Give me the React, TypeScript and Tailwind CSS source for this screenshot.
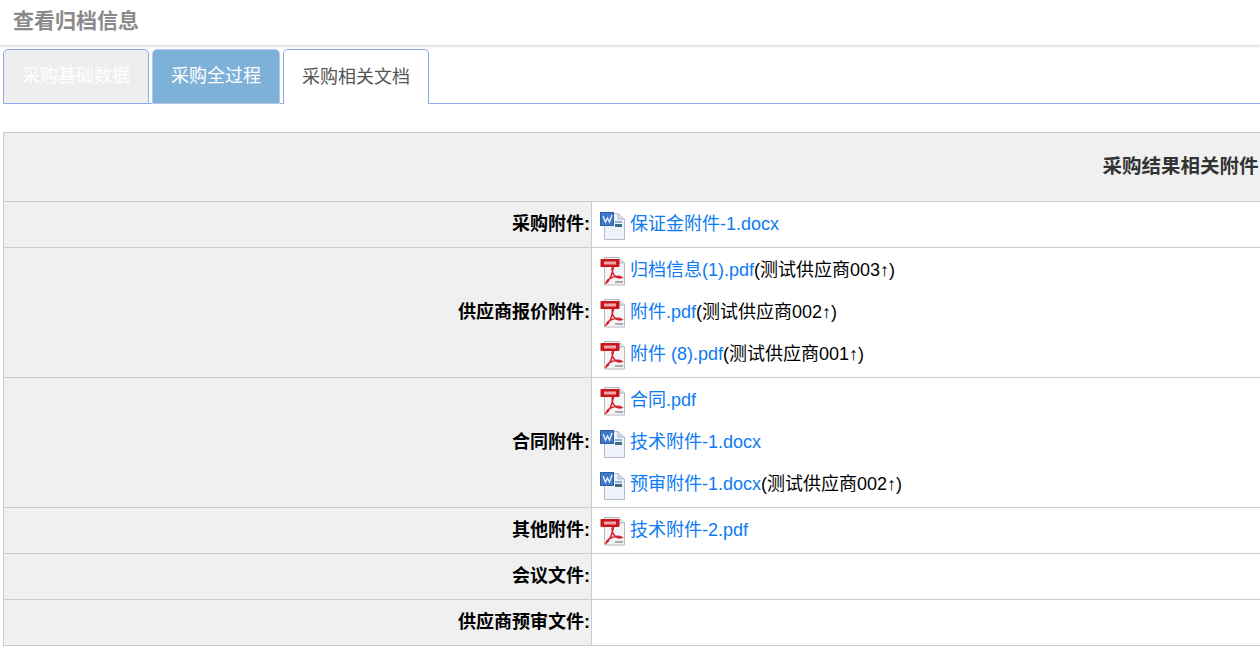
import React from 'react';

const FONT = "font-['Liberation_Sans','Noto_Sans_CJK_SC',sans-serif]";

const PdfIcon = () => (
  <svg width="26" height="30" viewBox="0 0 26 30" className="shrink-0">
    <path d="M4.5 1.5H19L24.5 7V29H4.5Z" fill="#f4f4f6" stroke="#b9b9bf" />
    <path d="M19 1.5V7H24.5" fill="#dcdce2" stroke="#b9b9bf" />
    <rect x="0.5" y="3" width="19" height="8" rx="1" fill="#c8171d" />
    <rect x="4" y="5.5" width="12" height="3" fill="#f0a7a7" />
    <path
      d="M12.5 11C11.5 14 12 16 14 19C16 21.5 19 22.5 22 21.5C19 19.5 15 20 10.5 22C8 23.5 6.5 25.5 6 27C9 25.5 11.5 20.5 13.5 11"
      fill="none"
      stroke="#d2232a"
      strokeWidth="1.5"
    />
    <rect x="15" y="25" width="8" height="2" fill="#a9a9ae" />
  </svg>
);

const WordIcon = () => (
  <svg width="26" height="30" viewBox="0 0 26 30" className="shrink-0">
    <path d="M4.5 3.5H18L24.5 9V29.5H4.5Z" fill="#eef2f9" stroke="#b4bccb" />
    <path d="M18 3.5V9H24.5" fill="#d5dce9" stroke="#b4bccb" />
    <rect x="0.5" y="2.5" width="13" height="13" fill="#3f77c9" stroke="#2f5ea8" />
    <path d="M3 6L5.5 12L7.5 8L9.5 12L12 5" fill="none" stroke="#e7effa" strokeWidth="1.4" />
    <rect x="15" y="11" width="7" height="2" fill="#8db0dc" />
    <rect x="15" y="14" width="7" height="3" fill="#3e6f7c" />
  </svg>
);

type FileItem = { name: string; type: 'pdf' | 'word'; vendor?: string };

const FileLine = ({ file }: { file: FileItem }) => (
  <div className="flex h-[30px] items-center">
    {file.type === 'pdf' ? <PdfIcon /> : <WordIcon />}
    <span className="ml-[4px] whitespace-nowrap">
      <a className="text-[#0d7bf2]">{file.name}</a>
      {file.vendor && <span className="text-black">({file.vendor}↑)</span>}
    </span>
  </div>
);

const rows: { label: string; heightClass: string; files: FileItem[] }[] = [
  { label: '采购附件:', heightClass: 'h-[46px]', files: [{ name: '保证金附件-1.docx', type: 'word' }] },
  {
    label: '供应商报价附件:',
    heightClass: 'h-[130px]',
    files: [
      { name: '归档信息(1).pdf', type: 'pdf', vendor: '测试供应商003' },
      { name: '附件.pdf', type: 'pdf', vendor: '测试供应商002' },
      { name: '附件 (8).pdf', type: 'pdf', vendor: '测试供应商001' },
    ],
  },
  {
    label: '合同附件:',
    heightClass: 'h-[130px]',
    files: [
      { name: '合同.pdf', type: 'pdf' },
      { name: '技术附件-1.docx', type: 'word' },
      { name: '预审附件-1.docx', type: 'word', vendor: '测试供应商002' },
    ],
  },
  { label: '其他附件:', heightClass: 'h-[46px]', files: [{ name: '技术附件-2.pdf', type: 'pdf' }] },
  { label: '会议文件:', heightClass: 'h-[46px]', files: [] },
  { label: '供应商预审文件:', heightClass: 'h-[46px]', files: [] },
];

const tabBase =
  'flex h-[55px] items-center justify-center rounded-t-[5px] border border-[#8fa9ef] text-[18px]';

export default function App() {
  return (
    <div className={`h-[648px] w-[1260px] overflow-hidden bg-white ${FONT}`}>
      <div className="flex h-[45px] items-center pb-[4px] pl-[13px] text-[21px] font-bold text-[#8a8a8a] shadow-[0_1px_3px_rgba(0,0,0,0.2)]">
        查看归档信息
      </div>

      <div className="mt-[4px] flex h-[55px] pl-[3px]">
        <div className={`${tabBase} w-[146px] bg-[#eeeeee] text-white`}>采购基础数据</div>
        <div className="w-[3px] border-b border-[#8fa9ef]" />
        <div className={`${tabBase} w-[128px] border-[#b8cbe6] bg-[#7db1d8] text-white`}>采购全过程</div>
        <div className="w-[3px] border-b border-[#8fa9ef]" />
        <div className={`${tabBase} w-[146px] border-b-0 bg-white text-[#555555]`}>采购相关文档</div>
        <div className="flex-1 border-b border-[#8fa9ef]" />
      </div>

      <div className="mt-[28px] ml-[3px] w-[2354px] border-t border-l border-[#cccccc] text-[18px]">
        <div className="flex h-[69px] items-center justify-center border-b border-[#cccccc] bg-[#f0f0f0] text-[19.5px] font-bold text-[#333333]">
          采购结果相关附件
        </div>
        {rows.map((row) => (
          <div key={row.label} className={`flex border-b border-[#cccccc] ${row.heightClass}`}>
            <div className="flex w-[588px] shrink-0 items-center justify-end border-r border-[#cccccc] bg-[#f0f0f0] pr-[1px] font-bold text-black">
              {row.label}
            </div>
            <div className="flex flex-1 flex-col justify-center gap-[12px] pl-[8px]">
              {row.files.map((file) => (
                <FileLine key={file.name} file={file} />
              ))}
            </div>
          </div>
        ))}
      </div>
    </div>
  );
}
